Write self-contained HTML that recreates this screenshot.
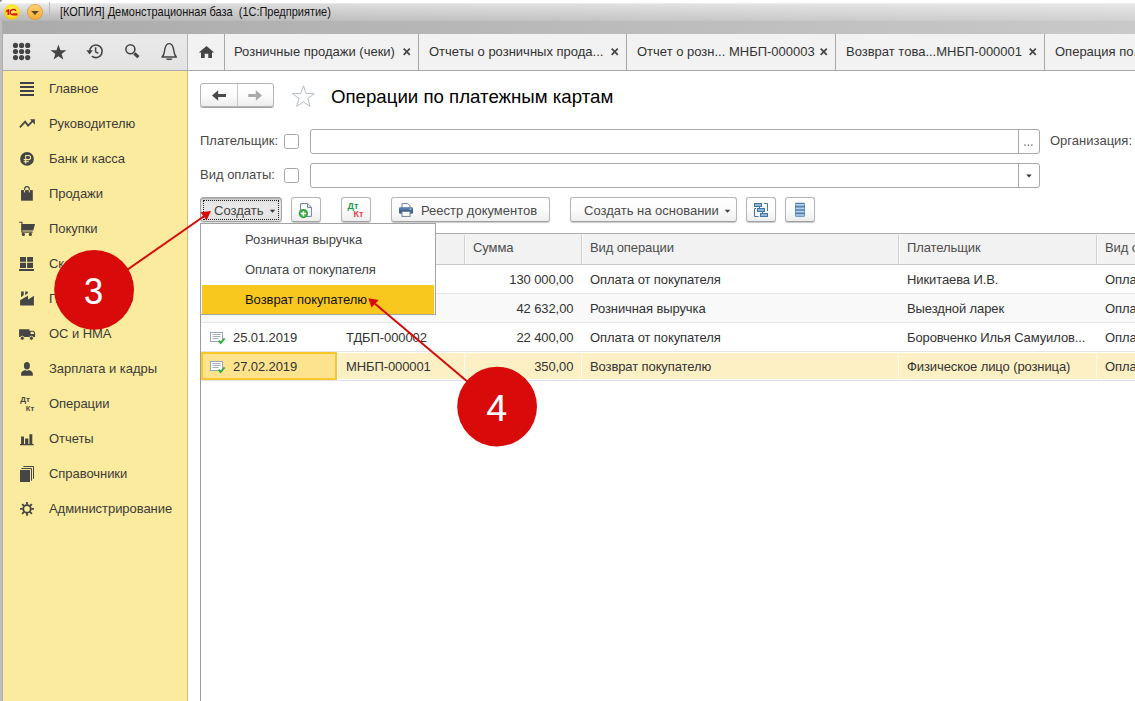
<!DOCTYPE html>
<html lang="ru">
<head>
<meta charset="utf-8">
<title>1C</title>
<style>
*{box-sizing:border-box;margin:0;padding:0}
html,body{width:1135px;height:701px;overflow:hidden;background:#fff}
body{font-family:"Liberation Sans",sans-serif;font-size:13px;color:#444;position:relative}
.abs{position:absolute}
#titlebar{left:0;top:0;width:1135px;height:34px;background:linear-gradient(to right,rgba(255,255,255,0),rgba(255,255,255,.355)),linear-gradient(#fff 0,#fff 2.5px,#d9d9d9 4px,#b8b8b8 20.3px,#ababab 21.2px,#ababab 34px)}
#tglow{left:0;top:0;width:320px;height:21px;background:radial-gradient(ellipse 100% 100% at 0 0,rgba(255,255,255,.55),rgba(255,255,255,0) 75%)}
#ttext{left:60px;top:4px;font-size:12.6px;color:#111;white-space:pre;line-height:16px;transform:scaleX(.872);transform-origin:0 0;letter-spacing:0}
#leftedge{left:0;top:20px;width:3px;height:681px;background:linear-gradient(to right,#bfbfbf 0,#bcbcbc 55%,#a6a6ab 100%)}
#tools{left:3px;top:34px;width:184px;height:36px;background:linear-gradient(#e9e9e9,#e3e3e3)}
#tabs{left:188px;top:34px;width:947px;height:36px;background:#f2f2f2}
#hline{left:3px;top:70px;width:1132px;height:1px;background:#a8a8a8}
#side{left:3px;top:71px;width:184px;height:630px;background:#fbeb9e}
#sideborder{left:187px;top:34px;width:1px;height:667px;background:#b4b4b4}
.tab{top:34px;height:36px;line-height:36px;white-space:pre;color:#333;font-size:13px;letter-spacing:0}
.x{font-size:16px;font-weight:bold;color:#444;width:11px;text-align:center;line-height:35px}
.tsep{top:34px;width:1px;height:36px;background:#a8a8a8}
.mi{letter-spacing:-0.05px;left:49px;height:20px;line-height:20px;white-space:pre;color:#3b3b3b;font-size:13px}
.lbl{white-space:pre;line-height:16px;height:16px;color:#4a4a4a}
.chk{width:15px;height:15px;border:1px solid #a6a6a6;border-radius:2.5px;background:#fff}
.inp{height:25px;border:1px solid #a9a9a9;border-radius:3px;background:#fff}
.btn{top:197px;height:25px;border:1px solid #b6b6b6;border-bottom-color:#a0a0a0;border-radius:3px;background:linear-gradient(#ffffff,#fcfcfc 50%,#eeeeee);box-shadow:0 1px 1px rgba(0,0,0,.22);white-space:pre;line-height:23px;color:#444}
.th{letter-spacing:-0.1px;top:234px;height:30px;line-height:28px;white-space:pre;color:#4d4d4d}
.td{letter-spacing:-0.1px;height:29px;line-height:29px;white-space:pre;color:#333}
.vs{top:235px;width:1px;height:28px;background:#d0d0d0}
</style>
</head>
<body>
<div id="titlebar" class="abs"></div>
<div id="tglow" class="abs"></div>
<div id="leftedge" class="abs"></div>
<div class="abs" style="left:0;top:0;width:2px;height:2px;background:#8d8d8d;border-radius:0 0 2px 0"></div>
<div id="ttext" class="abs">[КОПИЯ] Демонстрационная база  (1С:Предприятие)</div>
<div id="tools" class="abs"></div>
<div id="tabs" class="abs"></div>
<div id="hline" class="abs"></div>
<div id="side" class="abs"></div>
<div id="sideborder" class="abs"></div>
<div class="abs" style="left:187px;top:71px;width:1px;height:630px;background:#c9bd80"></div>
<svg class="abs" style="left:0;top:0" width="56" height="26" viewBox="0 0 56 26">
<defs>
<radialGradient id="g1" cx="50%" cy="40%" r="60%"><stop offset="0" stop-color="#fff36a"/><stop offset=".7" stop-color="#fbe11a"/><stop offset="1" stop-color="#e9bd10"/></radialGradient>
<linearGradient id="g2" x1="0" y1="0" x2="0" y2="1"><stop offset="0" stop-color="#fdd27a"/><stop offset="1" stop-color="#f9ab2e"/></linearGradient>
</defs>
<circle cx="12" cy="12" r="7.8" fill="url(#g1)"/>
<path d="M5.8 10.7 L8 9.2 H9.3 V14.9 H7.5 V11.4 L5.8 12.3 Z" fill="#e20f17"/>
<path d="M16.1 10.7 C15 9.3 12.6 9 11.3 10.1 C10 11.3 10 13 11 14 C11.6 14.6 12.4 14.7 13.4 14.7 H17.4" fill="none" stroke="#e20f17" stroke-width="1.4"/>
<path d="M12.6 13.2 H17.4 V13.9 H12.6 Z" fill="#e20f17"/>
<circle cx="35" cy="12" r="7.6" fill="url(#g2)" stroke="#d39b3a" stroke-width="0.8"/>
<path d="M31.2 11 H38.8 L35 14.9 Z" fill="#5a4626"/>
<rect x="49" y="2" width="1" height="16" fill="#bcbcbc"/>
</svg>
<!--TABS-->
<svg class="abs" style="left:3px;top:34px" width="184" height="36" viewBox="0 0 184 36">
<g fill="#444"><circle cx="12.5" cy="11.4" r="2.6"/><circle cx="18.6" cy="11.4" r="2.6"/><circle cx="24.7" cy="11.4" r="2.6"/><circle cx="12.5" cy="17.5" r="2.6"/><circle cx="18.6" cy="17.5" r="2.6"/><circle cx="24.7" cy="17.5" r="2.6"/><circle cx="12.5" cy="23.6" r="2.6"/><circle cx="18.6" cy="23.6" r="2.6"/><circle cx="24.7" cy="23.6" r="2.6"/>
<path d="M55.45 10.60 L57.39 16.23 L63.34 16.34 L58.59 19.92 L60.33 25.61 L55.45 22.20 L50.57 25.61 L52.31 19.92 L47.56 16.34 L53.51 16.23 Z"/>
</g>
<g fill="none" stroke="#444" stroke-width="1.6">
<path d="M86.60 17.30 A6.3 6.3 0 1 1 88.85 22.13"/>
<path d="M92.6 13.2 V17.8 L95.4 19.4" stroke-width="1.5"/>
<circle cx="127.4" cy="15.2" r="4.5"/>
<path d="M131.4 19.4 L135.4 23.2" stroke-width="3.2"/>
<path d="M159 23 C161.6 21 161.2 17.5 162 14.5 C162.8 11.3 164.5 9.6 166.2 9.6 C167.9 9.6 169.6 11.3 170.4 14.5 C171.2 17.5 170.8 21 173.4 23 Z" stroke-width="1.4" stroke-linejoin="round"/>
</g>
<path d="M83.4 16.2 L86.6 20.6 L89.8 16.2 Z" fill="#444"/>
<path d="M163 24.4 H169.4 A3.2 1.6 0 0 1 163 24.4 Z" fill="#444"/>
</svg>
<svg class="abs" style="left:198px;top:45px" width="17" height="14" viewBox="0 0 17 14"><path d="M8.5 0.9 L16.2 7.6 H14 V13 H10.3 V8.8 H6.7 V13 H3 V7.6 H0.8 Z" fill="#444"/></svg>
<svg class="abs" style="left:402.9px;top:47.6px" width="8" height="8" viewBox="0 0 8 8"><path d="M0.7 0.7 L6.8 6.8 M6.8 0.7 L0.7 6.8" stroke="#454545" stroke-width="1.7" fill="none"/></svg>
<svg class="abs" style="left:610.8px;top:47.6px" width="8" height="8" viewBox="0 0 8 8"><path d="M0.7 0.7 L6.8 6.8 M6.8 0.7 L0.7 6.8" stroke="#454545" stroke-width="1.7" fill="none"/></svg>
<svg class="abs" style="left:819.8px;top:47.6px" width="8" height="8" viewBox="0 0 8 8"><path d="M0.7 0.7 L6.8 6.8 M6.8 0.7 L0.7 6.8" stroke="#454545" stroke-width="1.7" fill="none"/></svg>
<svg class="abs" style="left:1028.7px;top:47.6px" width="8" height="8" viewBox="0 0 8 8"><path d="M0.7 0.7 L6.8 6.8 M6.8 0.7 L0.7 6.8" stroke="#454545" stroke-width="1.7" fill="none"/></svg>
<div class="abs tsep" style="left:224px"></div>
<div class="abs tab" style="left:234px">Розничные продажи (чеки)</div>
<div class="abs tsep" style="left:418px"></div>
<div class="abs tab" style="left:429px">Отчеты о розничных прода...</div>
<div class="abs tsep" style="left:626px"></div>
<div class="abs tab" style="left:637px">Отчет о розн... МНБП-000003</div>
<div class="abs tsep" style="left:835px"></div>
<div class="abs tab" style="left:846px">Возврат това...МНБП-000001</div>
<div class="abs tsep" style="left:1044px"></div>
<div class="abs tab" style="left:1055px">Операция по...</div>
<!--SIDEBAR-->
<svg class="abs" style="left:19px;top:81px;overflow:visible" width="16" height="16" viewBox="0 -0.5 16 16"><path d="M1 0.5H15V2.5H1Z M1 4.5H15V6.5H1Z M1 8.5H15V10.5H1Z M1 12.5H15V14.5H1Z" fill="#404045"/></svg><div class="abs mi" style="top:78.7px">Главное</div>
<svg class="abs" style="left:19px;top:116px;overflow:visible" width="16" height="16" viewBox="0 -0.5 16 16"><path d="M0.9 10.9 L6.1 5.2 L9.1 9.1 L14.3 3.9" fill="none" stroke="#454545" stroke-width="1.8"/><path d="M11 2.7 H15.9 V8.2 Z" fill="#454545"/></svg><div class="abs mi" style="top:113.7px">Руководителю</div>
<svg class="abs" style="left:19px;top:151px;overflow:visible" width="16" height="16" viewBox="0 -0.5 16 16"><circle cx="8" cy="7.4" r="6.9" fill="#454545"/><path d="M6.7 12.2 V3.9 H9.5 A2.1 2.1 0 0 1 9.5 8.1 H4.7 M4.7 10.2 H9.8" fill="none" stroke="#fbeb9e" stroke-width="1.05"/></svg><div class="abs mi" style="top:148.7px">Банк и касса</div>
<svg class="abs" style="left:19px;top:186px;overflow:visible" width="16" height="16" viewBox="0 -0.5 16 16"><path d="M2 3.6 H13.8 V14.2 H2 Z" fill="#454545"/><path d="M5.6 3.8 V2.5 A2.35 2.35 0 0 1 10.3 2.5 V3.8" fill="none" stroke="#454545" stroke-width="1.1"/><path d="M5.6 3.6 V5.9 M10.3 3.6 V5.9" fill="none" stroke="#fbeb9e" stroke-width="1"/></svg><div class="abs mi" style="top:183.7px">Продажи</div>
<svg class="abs" style="left:19px;top:221px;overflow:visible" width="16" height="16" viewBox="0 -0.5 16 16"><path d="M2.4 2.6 H16 L14.2 9.1 H2.4 Z" fill="#454545"/><path d="M0.1 0.7 H2.95 V10.6 H13.6" fill="none" stroke="#454545" stroke-width="1.1"/><circle cx="4.4" cy="12.9" r="1.6" fill="#454545"/><circle cx="11.4" cy="12.9" r="1.6" fill="#454545"/></svg><div class="abs mi" style="top:218.7px">Покупки</div>
<svg class="abs" style="left:19px;top:256px;overflow:visible" width="16" height="16" viewBox="0 -0.5 16 16"><path d="M1 0.6H7V5.2H1Z M8.1 0.6H14V5.2H8.1Z M1 6.3H7V11.4H1Z M8.1 6.3H14V11.4H8.1Z M0.1 12.5H15V14.4H0.1Z" fill="#454545"/></svg><div class="abs mi" style="top:253.7px">Склад</div>
<svg class="abs" style="left:19px;top:291px;overflow:visible" width="16" height="16" viewBox="0 -0.5 16 16"><path transform="translate(0 -0.5)" d="M1.1 14.4 V9.2 L8.8 4.7 L9.3 8.6 L14.9 4.7 V14.4 Z M2.1 0.6 H4.75 V4 L2.1 6.2 Z M6.2 0.6 H8.8 V2.2 L6.2 4.2 Z" fill="#454545"/></svg><div class="abs mi" style="top:288.7px">Производство</div>
<svg class="abs" style="left:19px;top:326px;overflow:visible" width="16" height="16" viewBox="0 -0.5 16 16"><path d="M0.1 2.8 H10.4 V10.4 H0.1 Z M10.4 4.2 H13.6 Q16.1 4.2 16.1 6.8 V10.4 H10.4 Z" fill="#454545"/><path d="M11.6 5.3 H14 Q15 5.4 15.1 7.5 H11.6Z" fill="#fbeb9e"/><circle cx="3.3" cy="11.7" r="2" fill="#454545" stroke="#fbeb9e" stroke-width="0.8"/><circle cx="12.4" cy="11.7" r="2" fill="#454545" stroke="#fbeb9e" stroke-width="0.8"/></svg><div class="abs mi" style="top:323.7px">ОС и НМА</div>
<svg class="abs" style="left:19px;top:361px;overflow:visible" width="16" height="16" viewBox="0 -0.5 16 16"><ellipse cx="7.9" cy="4.3" rx="3" ry="3.7" fill="#454545"/><path d="M2.1 14.2 V12 C2.1 10 4.5 9 6 8.5 C7.2 9.6 8.7 9.6 9.9 8.5 C11.4 9 13.8 10 13.8 12 V14.2 Z" fill="#454545"/></svg><div class="abs mi" style="top:358.7px">Зарплата и кадры</div>
<svg class="abs" style="left:19px;top:396px;overflow:visible" width="16" height="16" viewBox="0 -0.5 16 16"><text x="1.3" y="5.2" font-family="Liberation Sans" font-weight="bold" font-size="8" fill="#454545">Дт</text><text x="6.8" y="14" font-family="Liberation Sans" font-weight="bold" font-size="7.6" fill="#454545">Кт</text></svg><div class="abs mi" style="top:393.7px">Операции</div>
<svg class="abs" style="left:19px;top:431px;overflow:visible" width="16" height="16" viewBox="0 -0.5 16 16"><path d="M2.1 4.9H5V12.5H2.1Z M6.1 7.1H9.3V12.5H6.1Z M10.4 2.8H13.3V12.5H10.4Z M1 12.4H14.7V13.8H1Z" fill="#454545"/></svg><div class="abs mi" style="top:428.7px">Отчеты</div>
<svg class="abs" style="left:19px;top:466px;overflow:visible" width="16" height="16" viewBox="0 -0.5 16 16"><path d="M1 3.5 H11 V15.5 H1 Z" fill="#454545"/><path d="M2.4 2 H12.5 V14.2 M4.4 0 H14.5 V12.4" fill="none" stroke="#454545" stroke-width="1"/></svg><div class="abs mi" style="top:463.7px">Справочники</div>
<svg class="abs" style="left:19px;top:501px;overflow:visible" width="16" height="16" viewBox="0 -0.5 16 16"><circle cx="8" cy="7.4" r="3.75" fill="none" stroke="#454545" stroke-width="1.9"/><path d="M12.20 7.40 L14.90 7.40 M10.97 10.37 L12.88 12.28 M8.00 11.60 L8.00 14.30 M5.03 10.37 L3.12 12.28 M3.80 7.40 L1.10 7.40 M5.03 4.43 L3.12 2.52 M8.00 3.20 L8.00 0.50 M10.97 4.43 L12.88 2.52 " stroke="#454545" stroke-width="1.8" fill="none"/></svg><div class="abs mi" style="top:498.7px">Администрирование</div>
<!--FORM-->
<div class="abs" style="left:200px;top:83px;width:74px;height:24px;border:1px solid #b4b4b4;border-radius:3px;background:linear-gradient(#fff,#fbfbfb 55%,#ececec);box-shadow:0 1px 0 #a2a2a2"></div>
<div class="abs" style="left:237px;top:84px;width:1px;height:22px;background:#c6c6c6"></div>
<svg class="abs" style="left:200px;top:83px" width="74" height="24" viewBox="0 0 74 24">
<path d="M12 12.5 L18.2 7.2 V11 H26 V14 H18.2 V17.8 Z" fill="#4a4a4a"/>
<path d="M62 12.5 L55.8 7.2 V11 H48.3 V14 H55.8 V17.8 Z" fill="#a9a9a9"/>
</svg>
<svg class="abs" style="left:290px;top:83px" width="28" height="26" viewBox="0 0 28 26"><path d="M13.40 2.80 L16.10 10.48 L24.24 10.68 L17.77 15.62 L20.10 23.42 L13.40 18.80 L6.70 23.42 L9.03 15.62 L2.56 10.68 L10.70 10.48 Z" fill="#fff" stroke="#b3bcc6" stroke-width="1"/></svg>
<div class="abs" id="ftitle" style="left:331px;top:85px;font-size:18.67px;letter-spacing:0;line-height:24px;color:#000;white-space:pre">Операции по платежным картам</div>
<div class="abs lbl" style="left:200px;top:133px">Плательщик:</div>
<div class="abs lbl" style="left:200px;top:167px">Вид оплаты:</div>
<div class="abs chk" style="left:284px;top:134px"></div>
<div class="abs chk" style="left:284px;top:168px"></div>
<div class="abs inp" style="left:310px;top:129px;width:730px"></div>
<div class="abs inp" style="left:310px;top:163px;width:730px"></div>
<div class="abs" style="left:1018px;top:130px;width:1px;height:23px;background:#a9a9a9"></div>
<div class="abs" style="left:1018px;top:164px;width:1px;height:23px;background:#a9a9a9"></div>
<svg class="abs" style="left:1019px;top:130px" width="20" height="23" viewBox="0 0 20 23"><path d="M5.3 14.4h1.3v1.3h-1.3z M8.8 14.4h1.3v1.3h-1.3z M12.2 14.4h1.3v1.3h-1.3z" fill="#555"/></svg>
<svg class="abs" style="left:1019px;top:165px" width="20" height="22" viewBox="0 0 20 22"><path d="M7.3 9.6 H12.7 L10 12.6 Z" fill="#333"/></svg>
<div class="abs lbl" style="left:1050px;top:133px">Организация:</div>
<!--BUTTONS-->
<div class="abs btn" style="left:200px;width:82px;background:linear-gradient(#dcdcdc,#e9e9e9 35%,#e6e6e6 70%,#dedede);border-color:#a3a3a3;box-shadow:inset 0 1px 0 #b2b2b2,inset 0 2px 1px #cfcfcf,0 1px 0 #dcdcdc"></div>
<div class="abs" style="left:203px;top:200px;width:76px;height:20px;border:1px dotted #222"></div>
<div class="abs lbl" style="left:214px;top:203px;color:#444">Создать</div>
<svg class="abs" style="left:268px;top:207px" width="9" height="8" viewBox="0 0 9 8"><path d="M1.8 2.8 H7.2 L4.5 5.8 Z" fill="#3a3a3a"/></svg>

<div class="abs btn" style="left:291px;width:30px"></div>
<svg class="abs" style="left:297px;top:201px" width="18" height="18" viewBox="0 0 18 18">
<path d="M3.6 2.6 H10.8 L14.4 6.2 V15.4 H3.6 Z" fill="#fdfdfd" stroke="#6c7f99" stroke-width="1"/>
<path d="M10.6 2.8 V6.4 H14.2" fill="#e8edf3" stroke="#6c7f99" stroke-width="1"/>
<circle cx="6.4" cy="12.6" r="4.6" fill="#2e9c37"/><circle cx="6.4" cy="12.6" r="3.6" fill="#3eb449"/>
<path d="M6.4 10 V15.2 M3.8 12.6 H9" stroke="#fff" stroke-width="1.5"/>
</svg>

<div class="abs btn" style="left:341px;width:30px"></div>
<div class="abs" style="left:347.5px;top:201px;font-size:9px;font-weight:bold;color:#1d9a4b;line-height:10px;white-space:pre">Дт</div>
<div class="abs" style="left:353.5px;top:208.8px;font-size:9px;font-weight:bold;color:#e2434f;line-height:10px;white-space:pre">Кт</div>

<div class="abs btn" style="left:391px;width:159px"></div>
<svg class="abs" style="left:398px;top:202px" width="16" height="16" viewBox="0 0 16 16">
<path d="M4 5.6 V1.6 H9.8 L12 3.8 V5.6" fill="#fff" stroke="#6d7f97" stroke-width="1"/>
<rect x="1" y="5.4" width="14" height="6.4" rx="1.4" fill="#3f6290"/>
<rect x="1" y="5.4" width="14" height="2.2" rx="1" fill="#5b7fae"/>
<rect x="4" y="9.4" width="8" height="5" fill="#fff" stroke="#6d7f97" stroke-width="1"/>
<rect x="11.6" y="6.6" width="1.6" height="1" fill="#dfe8f3"/>
</svg>
<div class="abs lbl" style="left:421px;top:203px">Реестр документов</div>

<div class="abs btn" style="left:570px;width:167px"></div>
<div class="abs lbl" style="left:584px;top:203px">Создать на основании</div>
<svg class="abs" style="left:723px;top:207px" width="9" height="8" viewBox="0 0 9 8"><path d="M1.8 2.8 H7.2 L4.5 5.8 Z" fill="#3a3a3a"/></svg>

<div class="abs btn" style="left:746px;width:30px"></div>
<svg class="abs" style="left:753px;top:202px" width="16" height="16" viewBox="0 0 16 16">
<g fill="#8fb4d6" stroke="#3f77a9" stroke-width="1"><rect x="1.5" y="1.5" width="7" height="3"/><rect x="4.5" y="6.5" width="7" height="3"/><rect x="7.5" y="11.5" width="7" height="3"/></g>
<path d="M3 6.5 H1.5 V14.5 H5.5 M11 1.5 H14.5 V9 M6.5 4.5 V6.5 M9.5 9.5 V11.5" fill="none" stroke="#3f77a9" stroke-width="1"/>
</svg>

<div class="abs btn" style="left:785px;width:30px"></div>
<svg class="abs" style="left:794px;top:202px" width="12" height="16" viewBox="0 0 12 16">
<rect x="1" y="0.8" width="10" height="14" rx="1.2" fill="#4f7fb0"/>
<path d="M1.6 2 H10.4 V3.8 H1.6Z M1.6 5.4 H10.4 V7.2 H1.6Z M1.6 8.8 H10.4 V10.6 H1.6Z M1.6 12.2 H10.4 V13.8 H1.6Z" fill="#b9d2ea"/>
</svg>
<!--TABLE-->
<div class="abs" style="left:200px;top:233px;width:935px;height:1px;background:#adadad"></div>
<div class="abs" style="left:201px;top:234px;width:934px;height:30px;background:#f2f2f2"></div>
<div class="abs" style="left:201px;top:264px;width:934px;height:1px;background:#c9c9c9"></div>
<div class="abs" style="left:201px;top:265px;width:934px;height:28px;background:#fff"></div><div class="abs" style="left:201px;top:293px;width:934px;height:1px;background:#e6e6e6"></div>
<div class="abs" style="left:201px;top:294px;width:934px;height:28px;background:#f9f9f9"></div><div class="abs" style="left:201px;top:322px;width:934px;height:1px;background:#e6e6e6"></div>
<div class="abs" style="left:201px;top:323px;width:934px;height:28px;background:#fff"></div><div class="abs" style="left:201px;top:351px;width:934px;height:1px;background:#e6e6e6"></div>
<div class="abs" style="left:201px;top:353px;width:934px;height:26px;background:#fdf0c5"></div><div class="abs" style="left:201px;top:379px;width:934px;height:1px;background:#fff"></div><div class="abs" style="left:201px;top:380px;width:934px;height:1px;background:#e2e2e2"></div>
<div class="abs" style="left:337px;top:235px;width:1px;height:29px;background:#cfcfcf"></div><div class="abs" style="left:338px;top:235px;width:1px;height:29px;background:#fbfbfb"></div><div class="abs" style="left:337px;top:353px;width:1px;height:26px;background:#fffaf0"></div>
<div class="abs" style="left:464px;top:235px;width:1px;height:29px;background:#cfcfcf"></div><div class="abs" style="left:465.4px;top:235px;width:1px;height:29px;background:#fbfbfb"></div><div class="abs" style="left:464px;top:353px;width:1px;height:26px;background:#fffaf0"></div>
<div class="abs" style="left:581px;top:235px;width:1px;height:29px;background:#cfcfcf"></div><div class="abs" style="left:582px;top:235px;width:1px;height:29px;background:#fbfbfb"></div><div class="abs" style="left:581px;top:353px;width:1px;height:26px;background:#fffaf0"></div>
<div class="abs" style="left:898px;top:235px;width:1px;height:29px;background:#cfcfcf"></div><div class="abs" style="left:899px;top:235px;width:1px;height:29px;background:#fbfbfb"></div><div class="abs" style="left:898px;top:353px;width:1px;height:26px;background:#fffaf0"></div>
<div class="abs" style="left:1096px;top:235px;width:1px;height:29px;background:#cfcfcf"></div><div class="abs" style="left:1097px;top:235px;width:1px;height:29px;background:#fbfbfb"></div><div class="abs" style="left:1096px;top:353px;width:1px;height:26px;background:#fffaf0"></div>
<div class="abs th" style="left:473px">Сумма</div><div class="abs th" style="left:590px">Вид операции</div><div class="abs th" style="left:907px">Плательщик</div><div class="abs th" style="left:1105px">Вид оплаты</div>
<div class="abs" style="left:201px;top:352px;width:136px;height:28px;background:#fde38e;border:2px solid #f8c72c"></div>
<div class="abs td" style="left:465.4px;top:265px;width:108px;text-align:right">130 000,00</div><div class="abs td" style="left:590px;top:265px">Оплата от покупателя</div><div class="abs td" style="left:907px;top:265px">Никитаева И.В.</div><div class="abs td" style="left:1105px;top:265px">Оплата</div>
<div class="abs td" style="left:465.4px;top:294px;width:108px;text-align:right">42 632,00</div><div class="abs td" style="left:590px;top:294px">Розничная выручка</div><div class="abs td" style="left:907px;top:294px">Выездной ларек</div><div class="abs td" style="left:1105px;top:294px">Оплата</div>
<svg class="abs" style="left:209px;top:330px" width="17" height="15" viewBox="0 0 17 15"><rect x="1.5" y="2.5" width="12" height="9" fill="#fdfdfe" stroke="#9ba7b8" stroke-width="1"/><path d="M3.5 4.5 H11.5 M3.5 6.5 H11.5 M3.5 8.5 H9.5" stroke="#a9adb5" stroke-width="1"/><path d="M9.6 10.6 L11.6 13 L15.6 8.4" fill="none" stroke="#2db53a" stroke-width="1.9"/></svg><div class="abs td" style="left:233px;top:323px">25.01.2019</div><div class="abs td" style="left:346px;top:323px">ТДБП-000002</div><div class="abs td" style="left:465.4px;top:323px;width:108px;text-align:right">22 400,00</div><div class="abs td" style="left:590px;top:323px">Оплата от покупателя</div><div class="abs td" style="left:907px;top:323px">Боровченко Илья Самуилов...</div><div class="abs td" style="left:1105px;top:323px">Оплата</div>
<svg class="abs" style="left:209px;top:359px" width="17" height="15" viewBox="0 0 17 15"><rect x="1.5" y="2.5" width="12" height="9" fill="#fdfdfe" stroke="#9ba7b8" stroke-width="1"/><path d="M3.5 4.5 H11.5 M3.5 6.5 H11.5 M3.5 8.5 H9.5" stroke="#a9adb5" stroke-width="1"/><path d="M9.6 10.6 L11.6 13 L15.6 8.4" fill="none" stroke="#2db53a" stroke-width="1.9"/></svg><div class="abs td" style="left:233px;top:352px">27.02.2019</div><div class="abs td" style="left:346px;top:352px">МНБП-000001</div><div class="abs td" style="left:465.4px;top:352px;width:108px;text-align:right">350,00</div><div class="abs td" style="left:590px;top:352px">Возврат покупателю</div><div class="abs td" style="left:907px;top:352px">Физическое лицо (розница)</div><div class="abs td" style="left:1105px;top:352px">Оплата</div>
<div class="abs" style="left:200px;top:233px;width:1px;height:468px;background:#9c9c9c"></div>
<!--MENU-->
<div class="abs" style="left:200px;top:223px;width:236px;height:92px;background:#fff;border:1px solid #a3a3a3"></div>
<div class="abs" style="left:202px;top:285px;width:232px;height:29px;background:#f9c81e"></div>
<div class="abs lbl" style="left:245px;top:232px;color:#444">Розничная выручка</div>
<div class="abs lbl" style="left:245px;top:262px;color:#444;letter-spacing:-0.1px">Оплата от покупателя</div>
<div class="abs lbl" style="left:245px;top:292px;color:#111;letter-spacing:-0.05px">Возврат покупателю</div>
<!--CALLOUTS-->
<svg class="abs" style="left:0;top:0" width="1135" height="701" viewBox="0 0 1135 701">
<g stroke="#d80a0a" stroke-width="2" fill="#d80a0a">
<line x1="94" y1="293" x2="204" y2="216.2"/>
<path d="M211 211 L200.5 212.2 L206.5 220.5 Z" stroke="none"/>
<line x1="497" y1="406.6" x2="375" y2="303.8"/>
<path d="M368.3 298.3 L378.8 300 L371.5 307.5 Z" stroke="none"/>
<circle cx="94.1" cy="289.8" r="39.9" stroke="none"/>
<circle cx="497.1" cy="406.6" r="39.9" stroke="none"/>
</g>
<text x="0" y="0" transform="translate(93.5 303.8) scale(.93 1)" font-family="Liberation Sans" font-size="37" fill="#fff" stroke="#fff" stroke-width="0.2" text-anchor="middle">3</text>
<text x="496.8" y="421" font-family="Liberation Sans" font-size="37" fill="#fff" stroke="#fff" stroke-width="0.2" text-anchor="middle">4</text>
</svg>
</body>
</html>
